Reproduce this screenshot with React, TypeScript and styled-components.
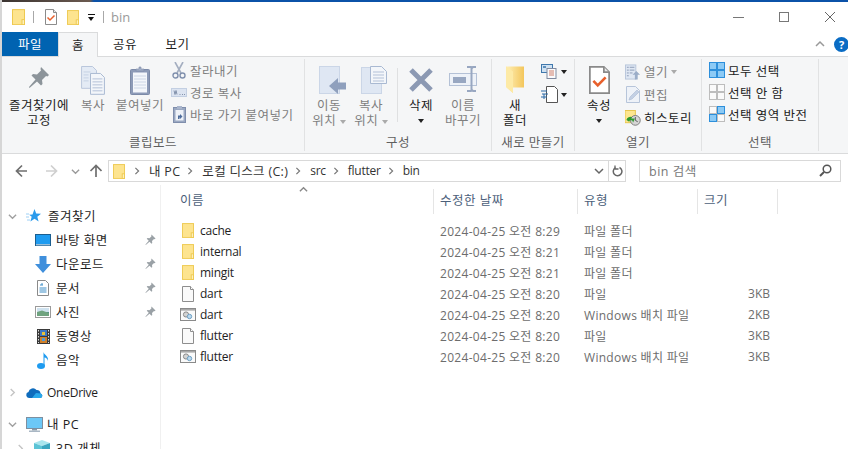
import { FC, ReactNode } from "react";
import styled, { createGlobalStyle, css } from "styled-components";

const GlobalStyle = createGlobalStyle`
  html, body {
    margin: 0;
    padding: 0;
    background: #fff;
    overflow: hidden;
  }
  body {
    font-family: "Open Sans", "Noto Sans CJK KR", sans-serif;
    font-size: 12.5px;
    letter-spacing: 0.5px;
    color: #1e1e1e;
  }
`;

const latinText = css`
  font-size: 12px;
  letter-spacing: -0.25px;
`;

type IconProps = { size?: number };

const FolderIcon: FC<IconProps> = ({ size = 13 }) => (
  <svg width={size} height={size * 1.25} viewBox="0 0 13 16">
    <rect x="0.5" y="0.5" width="12" height="15" fill="#fde48f" stroke="#eec94f" />
    <rect x="10" y="10.5" width="2.5" height="5" fill="#fdf0bd" stroke="#eec94f" />
  </svg>
);

const CheckDocIcon: FC<IconProps> = ({ size = 12 }) => (
  <svg width={size} height={size * 1.34} viewBox="0 0 12 16">
    <path d="M.5.5h8l3 3v12H.5z" fill="#fff" stroke="#8a8a8a" />
    <path d="M8.5.5v3h3" fill="#e8e8e8" stroke="#8a8a8a" />
    <path d="M2.5 8.5l2.5 2.5 4.5-4.5" fill="none" stroke="#e8602c" strokeWidth="1.5" />
  </svg>
);

const FileIcon: FC = () => (
  <svg width="12" height="16" viewBox="0 0 12 16">
    <path d="M.5.5h8l3 3v12H.5z" fill="#fafafa" stroke="#8e8e8e" />
    <path d="M8.5.5v3h3" fill="#fff" stroke="#8e8e8e" />
  </svg>
);

const BatchIcon: FC = () => (
  <svg width="16" height="13" viewBox="0 0 16 13">
    <rect x="0.5" y="0.5" width="15" height="12" fill="#fafafa" stroke="#8a8a8a" />
    <rect x="1" y="1" width="14" height="1.6" fill="#a8a8a8" />
    <circle cx="6" cy="6.5" r="2.6" fill="#d4d4d4" stroke="#8a8a8a" />
    <circle cx="9.5" cy="8.5" r="2.2" fill="#bcd9ee" stroke="#6ea0c4" />
  </svg>
);

const PinIcon: FC<IconProps & { color?: string }> = ({ size = 22, color = "#8c949a" }) => (
  <svg width={size} height={size} viewBox="0 0 22 22">
    <path d="M13 1l8 8-1.5 1.5-1.5-.5-4 4 .5 4-1.5 1.5-4-4-7.5 6.5L1 21l6.500-7.500-4-4L5 8l4 .5 4-4-.5-1.500z" fill={color} />
  </svg>
);

const CopyIcon: FC<IconProps> = ({ size = 24 }) => (
  <svg width={size} height={size * 1.2} viewBox="0 0 24 29">
    <path d="M.5.5h11l4 4v18H.5z" fill="#e4ebf5" stroke="#b9c7dc" />
    <path d="M9.500 7.500h10l4 4v17h-14z" fill="#f3f6fa" stroke="#a9b9d2" />
    <path d="M11.500 13h10M11.500 16h10M11.500 19h10M11.500 22h10M11.500 25h10" stroke="#b3c1d8" />
    <path d="M2.500 6h7M2.500 9h5M2.500 12h5M2.500 15h5" stroke="#c6d2e4" />
  </svg>
);

const ClipboardIcon: FC = () => (
  <svg width="20" height="29" viewBox="0 0 20 29">
    <rect x="0.500" y="3.500" width="19" height="25" rx="1" fill="#8d9bb8" stroke="#7c8aa8" />
    <rect x="3" y="6.500" width="14" height="20" fill="#f3f6fb" />
    <path d="M4 10h12M4 13h12M4 16h12M4 19h12M4 22h12" stroke="#ccd6e6" />
    <path d="M6 5V3h3V1h2v2h3v2z" fill="#a2aec6" stroke="#7c8aa8" strokeWidth=".6" />
  </svg>
);

const ScissorsIcon: FC = () => (
  <svg width="14" height="17" viewBox="0 0 14 17">
    <path d="M3 0l6 11M11 0L5 11" stroke="#a4aec0" strokeWidth="1.600" fill="none" />
    <circle cx="3.500" cy="13.500" r="2.500" fill="none" stroke="#8090ad" strokeWidth="1.400" />
    <circle cx="10.500" cy="13.500" r="2.500" fill="none" stroke="#8090ad" strokeWidth="1.400" />
  </svg>
);

const PathCopyIcon: FC = () => (
  <svg width="16" height="9" viewBox="0 0 16 9">
    <rect x="0.500" y="0.500" width="15" height="8" fill="#dce4f1" stroke="#c3cfe2" />
    <path d="M3 2.500l1 4 1-4 1 4M8.500 6.500h1M11 6.500h1M13 6.500h1" stroke="#6f7f9c" strokeWidth=".8" fill="none" />
  </svg>
);

const ShortcutPasteIcon: FC = () => (
  <svg width="13" height="17" viewBox="0 0 13 17">
    <rect x="0.500" y="1.500" width="12" height="15" fill="#9aa8c2" stroke="#7f8eac" />
    <rect x="2.500" y="4" width="8" height="10.500" fill="#eef2f8" />
    <path d="M5 13v-3.500h2V8l2.500 2.500L7 13v-1.500H6.500V13z" fill="#4e6d9c" />
    <rect x="4" y="0" width="5" height="3" fill="#a9b5cc" />
  </svg>
);

const MoveIcon: FC = () => (
  <svg width="33" height="28" viewBox="-6 0 33 28">
    <rect x="0.500" y="0.500" width="20" height="27" fill="#dfe7f3" stroke="#cbd6e7" />
    <path d="M10 20l9-8v4.500h8v7h-8V28z" fill="#8fa0bd" />
  </svg>
);

const CopyToIcon: FC = () => (
  <svg width="32" height="28" viewBox="-6 0 32 28">
    <rect x="0.500" y="1.500" width="20" height="26" fill="#dfe7f3" stroke="#cbd6e7" />
    <path d="M9.500.5h11l5 5v12h-16z" fill="#f3f6fa" stroke="#a9b9d2" />
    <path d="M12 6h11M12 9h11M12 12h11M12 15h11" stroke="#b3c1d8" />
  </svg>
);

const DeleteIcon: FC = () => (
  <svg width="26" height="27" viewBox="0 -1 26 27">
    <path d="M3 3l20 20M23 3L3 23" stroke="#8c99b3" strokeWidth="5" />
  </svg>
);

const RenameIcon: FC = () => (
  <svg width="28" height="26" viewBox="0 0 28 26">
    <rect x="0.500" y="7.500" width="27" height="12" fill="#eef2f8" stroke="#b4c1d6" />
    <rect x="4" y="11" width="13" height="6" fill="#98a7c1" />
    <path d="M18 1h4l1 1 1-1h3M18 25h4l1-1 1 1h3M22.500 2v22" stroke="#98a7c1" strokeWidth="2" fill="none" />
  </svg>
);

const NewFolderIcon: FC = () => (
  <svg width="19" height="27" viewBox="0 0 19 27">
    <defs>
      <linearGradient id="nf" x1="0" x2="1" y1="0" y2="0">
        <stop offset="0" stopColor="#fff0b8" />
        <stop offset="1" stopColor="#f3c65c" />
      </linearGradient>
    </defs>
    <path d="M0 .5h18v21H7v5.500L0 21z" fill="url(#nf)" />
    <path d="M0 .5l7 5V27L0 21z" fill="#fdeaa6" />
  </svg>
);

const NewItemIcon: FC = () => (
  <svg width="19" height="15" viewBox="0 0 19 15">
    <rect x="0.500" y="0.500" width="11" height="8" fill="#cfe1f2" stroke="#3f78ad" />
    <rect x="2" y="2" width="3" height="2" fill="#5c8fbc" />
    <rect x="6" y="4.500" width="9" height="10" fill="#fafbfd" stroke="#7f8aa0" />
    <path d="M8 7h5M8 9h5M8 11h5" stroke="#cf7f6a" />
  </svg>
);

const EasyAccessIcon: FC = () => (
  <svg width="19" height="17" viewBox="0 0 19 17">
    <path d="M5.500.5h8l3 3v13h-11z" fill="#fff" stroke="#555" />
    <path d="M0 5h6M1 8h6M0 11h6M3 8v5" stroke="#2a6aa8" />
  </svg>
);

const OpenWithIcon: FC = () => (
  <svg width="17" height="16" viewBox="0 0 17 16">
    <rect x="0.500" y="0.500" width="11" height="15" fill="#dfe7f3" stroke="#b7c5da" />
    <path d="M2 3h2M5 3h5M2 6h2M5 6h5M2 9h2M5 9h3M2 12h2" stroke="#8b9ab5" />
    <path d="M8 11l4-4 4 4h-2.500v5h-3v-5z" fill="#9badc8" />
  </svg>
);

const EditIcon: FC = () => (
  <svg width="14" height="17" viewBox="0 0 14 17">
    <path d="M.5.5h9l4 4v12H.5z" fill="#eef2f8" stroke="#b7c5da" />
    <path d="M3 14l1-3 7-7 2 2-7 7z" fill="#c3d0e4" stroke="#a9b9d2" strokeWidth=".6" />
  </svg>
);

const HistoryIcon: FC = () => (
  <svg width="17" height="16" viewBox="0 0 17 16">
    <rect x="0" y="0" width="11" height="13" fill="#fde68f" stroke="#e6c34a" />
    <circle cx="11" cy="10.500" r="5.200" fill="#d6d6d6" stroke="#7a7a7a" />
    <path d="M11 7v3.500l2.500 1.500" stroke="#555" fill="none" />
    <path d="M1.500 10a4.500 4.500 0 0 1 6-3l-1 1.500h4L8.500 13l-.5-2a2 2 0 0 0-3.500 1z" fill="#2f9a2f" />
  </svg>
);

const SelectAllIcon: FC<{ cells: boolean[] }> = ({ cells }) => (
  <svg width="16" height="16" viewBox="0 0 16 16">
    {cells.map((on, i) => (
      <rect
        key={i}
        x={i % 2 === 0 ? 0.5 : 8.5}
        y={i < 2 ? 0.5 : 8.5}
        width="7"
        height="7"
        fill={on ? "#8ccaf5" : "#fafafa"}
        stroke={on ? "#2d8fdb" : "#bdbdbd"}
      />
    ))}
  </svg>
);

const Chevron: FC<{ dir: "left" | "right" | "down" | "up"; color?: string; size?: number }> = ({
  dir,
  color = "#a0a0a0",
  size = 9,
}) => {
  const points = {
    right: "3,1 7,5 3,9",
    left: "7,1 3,5 7,9",
    down: "1,3 5,7 9,3",
    up: "1,7 5,3 9,7",
  }[dir];
  return (
    <svg width={size} height={size} viewBox="0 0 10 10">
      <polyline points={points} fill="none" stroke={color} strokeWidth="1.500" />
    </svg>
  );
};

const NavArrow: FC<{ dir: "left" | "right" | "up"; color: string }> = ({ dir, color }) => {
  const d = {
    left: "M12 7H2M7 1.500L1.500 7 7 12.500",
    right: "M1 7h10M6 1.500L11.500 7 6 12.500",
    up: "M7 13V2M1.500 7L7 1.500 12.500 7",
  }[dir];
  return (
    <svg width="13" height="14" viewBox="0 0 13 14">
      <path d={d} fill="none" stroke={color} strokeWidth="1.700" />
    </svg>
  );
};

const StarIcon: FC = () => (
  <svg width="15" height="14" viewBox="0 0 15 14">
    <path d="M8.500 0l1.700 4.500 4.800.2-3.700 3 1.300 4.800-4.100-2.700-4.100 2.700 1.300-4.800-2.500-2 3.300-.2z" fill="#2b9bec" />
    <path d="M0 5h3M0 8h3M1 11h3" stroke="#9ed0f5" />
  </svg>
);

const DesktopIcon: FC = () => (
  <svg width="16" height="12" viewBox="0 0 16 12">
    <rect x="0" y="0" width="16" height="12" fill="#1b5e8f" />
    <rect x="1" y="1" width="14" height="9" fill="#1e9bf0" />
    <rect x="1" y="10.300" width="14" height="1" fill="#cfe7f8" />
  </svg>
);

const DownloadIcon: FC = () => (
  <svg width="16" height="17" viewBox="0 0 16 17">
    <path d="M4.500 0h7v8H16l-8 9-8-9h4.500z" fill="#3f8fdc" />
  </svg>
);

const DocumentIcon: FC = () => (
  <svg width="12" height="16" viewBox="0 0 12 16">
    <path d="M.5.5h8l3 3v12H.5z" fill="#fff" stroke="#8a8a8a" />
    <path d="M3 5h3M5 3v2M2.500 8h7M2.500 10h7M2.500 12h7" stroke="#3f8fc8" />
  </svg>
);

const PictureIcon: FC = () => (
  <svg width="16" height="12" viewBox="0 0 16 12">
    <rect x="0.500" y="0.500" width="15" height="11" fill="#fff" stroke="#9a9a9a" />
    <rect x="2" y="2" width="12" height="4" fill="#cfe2ef" />
    <rect x="2" y="6" width="12" height="4" fill="#4f8f8a" />
    <path d="M2 6l5-1.500L14 7v3H2z" fill="#6fa37f" />
  </svg>
);

const VideoIcon: FC = () => (
  <svg width="13" height="15" viewBox="0 0 13 15">
    <rect width="13" height="15" fill="#3a3a3a" />
    <rect x="3" y="1" width="7" height="6" fill="#3e78c4" />
    <rect x="3" y="8" width="7" height="6" fill="#d0802a" />
    <rect x="5" y="3" width="3" height="3" fill="#e8c23a" />
    <rect x="5" y="9" width="3" height="3" fill="#4e9ad8" />
    <path d="M1.500 1v13M11.500 1v13" stroke="#ddd" strokeDasharray="1.500 1.500" />
  </svg>
);

const MusicIcon: FC = () => (
  <svg width="12" height="17" viewBox="0 0 12 17">
    <ellipse cx="4" cy="14" rx="4" ry="3" fill="#1e9bf0" />
    <path d="M6.500 14V0c.5 3 5.500 4 4.500 9-.5-2-2-3.500-3.500-3.500V14z" fill="#1e9bf0" />
  </svg>
);

const OneDriveIcon: FC = () => (
  <svg width="17" height="11" viewBox="0 0 17 11">
    <path d="M3 11a3 3 0 0 1-.5-5.900A4.500 4.500 0 0 1 10.500 3a3.500 3.500 0 0 1 4 3.500A2.300 2.300 0 0 1 14.500 11z" fill="#0f6cbd" />
    <path d="M6 11l4-5 4.500.5A2.300 2.300 0 0 1 14.500 11z" fill="#29a8ea" />
  </svg>
);

const MonitorIcon: FC = () => (
  <svg width="17" height="15" viewBox="0 0 17 15">
    <rect x="0.500" y="0.500" width="16" height="11" fill="#6cc8f7" stroke="#7d8fa0" />
    <rect x="6" y="12" width="5" height="1.500" fill="#8a9aa8" />
    <rect x="3" y="13.500" width="11" height="1.500" fill="#a9b7c4" />
  </svg>
);

const CubeIcon: FC = () => (
  <svg width="16" height="16" viewBox="0 0 16 16">
    <path d="M8 0l8 3-8 3-8-3z" fill="#a9e6ee" />
    <path d="M0 3l8 3v10L0 13z" fill="#5cc4d6" />
    <path d="M16 3L8 6v10l8-3z" fill="#3aa6c0" />
  </svg>
);

const SearchIcon: FC = () => (
  <svg width="13" height="13" viewBox="0 0 13 13">
    <circle cx="8" cy="5" r="3.800" fill="none" stroke="#555" strokeWidth="1.500" />
    <path d="M5 8l-4 4" stroke="#555" strokeWidth="2" />
  </svg>
);

const RefreshIcon: FC = () => (
  <svg width="11" height="12" viewBox="0 0 11 12">
    <path d="M7.500 2.500a4.300 4.300 0 1 1-4 .1" fill="none" stroke="#666" strokeWidth="1.500" />
    <path d="M3 .5v3.500h3.500" fill="none" stroke="#666" strokeWidth="1.300" />
  </svg>
);

const Large: FC<{ width: number; icon: ReactNode; muted?: boolean; caret?: boolean; children: ReactNode }> = ({
  width,
  icon,
  muted,
  caret,
  children,
}) => (
  <LargeButton $width={width} $muted={muted}>
    <LargeIcon>{icon}</LargeIcon>
    <LargeText>{children}</LargeText>
    {caret && (
      <CaretLine>
        <Caret />
      </CaretLine>
    )}
  </LargeButton>
);

const rows = [
  { name: "cache", icon: "folder", date: "2024-04-25 오전 8:29", type: "파일 폴더", size: "" },
  { name: "internal", icon: "folder", date: "2024-04-25 오전 8:21", type: "파일 폴더", size: "" },
  { name: "mingit", icon: "folder", date: "2024-04-25 오전 8:21", type: "파일 폴더", size: "" },
  { name: "dart", icon: "file", date: "2024-04-25 오전 8:20", type: "파일", size: "3KB" },
  { name: "dart", icon: "batch", date: "2024-04-25 오전 8:20", type: "Windows 배치 파일", size: "2KB" },
  { name: "flutter", icon: "file", date: "2024-04-25 오전 8:20", type: "파일", size: "3KB" },
  { name: "flutter", icon: "batch", date: "2024-04-25 오전 8:20", type: "Windows 배치 파일", size: "3KB" },
];

const quickAccess = [
  { label: "바탕 화면", icon: <DesktopIcon />, pin: true },
  { label: "다운로드", icon: <DownloadIcon />, pin: true },
  { label: "문서", icon: <DocumentIcon />, pin: true },
  { label: "사진", icon: <PictureIcon />, pin: true },
  { label: "동영상", icon: <VideoIcon />, pin: false },
  { label: "음악", icon: <MusicIcon />, pin: false },
];

const crumbs = [
  { label: "내 PC", latin: false },
  { label: "로컬 디스크 (C:)", latin: false },
  { label: "src", latin: true },
  { label: "flutter", latin: true },
  { label: "bin", latin: true },
];

const rowIcon = (kind: string) => {
  if (kind === "folder") return <FolderIcon size={12} />;
  if (kind === "file") return <FileIcon />;
  return <BatchIcon />;
};

export default function App() {
  return (
    <Window>
      <GlobalStyle />
      <TopStrip />
      <TitleBar>
        <QuickAccess>
          <FolderIcon />
          <TitleSep />
          <QuickItem>
            <CheckDocIcon />
          </QuickItem>
          <QuickItem>
            <FolderIcon size={12} />
          </QuickItem>
          <TitleCaret />
          <TitleSep />
          <TitleText>bin</TitleText>
        </QuickAccess>
        <WindowControls>
          <MinimizeGlyph />
          <MaximizeGlyph />
          <svg width="12" height="12" viewBox="0 0 12 12">
            <path d="M1 1l10 10M11 1L1 11" stroke="#666" />
          </svg>
        </WindowControls>
      </TitleBar>

      <TabBar>
        <FileTab>파일</FileTab>
        <HomeTab>홈</HomeTab>
        <PlainTab $width={54}>공유</PlainTab>
        <PlainTab $width={51}>보기</PlainTab>
        <TabSpacer />
        <Chevron dir="up" color="#999" size={10} />
        <HelpBadge>?</HelpBadge>
      </TabBar>

      <Ribbon>
        <Group $width={303}>
          <GroupBody $pad={6}>
            <Large width={62} icon={<PinIcon />}>
              즐겨찾기에
              <br />
              고정
            </Large>
            <Large width={46} muted icon={<CopyIcon />}>
              복사
            </Large>
            <Large width={48} muted icon={<ClipboardIcon />}>
              붙여넣기
            </Large>
            <SmallColumn $gap={7} $rowHeight={22}>
              <SmallRow $muted>
                <SmallIcon>
                  <ScissorsIcon />
                </SmallIcon>
                잘라내기
              </SmallRow>
              <SmallRow $muted>
                <SmallIcon>
                  <PathCopyIcon />
                </SmallIcon>
                경로 복사
              </SmallRow>
              <SmallRow $muted>
                <SmallIcon>
                  <ShortcutPasteIcon />
                </SmallIcon>
                바로 가기 붙여넣기
              </SmallRow>
            </SmallColumn>
          </GroupBody>
          <GroupLabel>클립보드</GroupLabel>
        </Group>

        <Group $width={187}>
          <GroupBody $pad={4}>
            <Large width={40} muted icon={<MoveIcon />}>
              이동
              <br />
              위치 <Caret $light />
            </Large>
            <Large width={44} muted icon={<CopyToIcon />}>
              복사
              <br />
              위치 <Caret $light />
            </Large>
            <InnerSep />
            <Large width={46} icon={<DeleteIcon />} caret>
              삭제
            </Large>
            <Large width={38} muted icon={<RenameIcon />}>
              이름
              <br />
              바꾸기
            </Large>
          </GroupBody>
          <GroupLabel>구성</GroupLabel>
        </Group>

        <Group $width={83}>
          <GroupBody $pad={3}>
            <Large width={40} icon={<NewFolderIcon />}>
              새
              <br />
              폴더
            </Large>
            <SmallColumn $gap={6} $rowHeight={23} $top={1}>
              <SmallRow $tight>
                <NewItemIcon />
                <Caret />
              </SmallRow>
              <SmallRow $tight>
                <EasyAccessIcon />
                <Caret />
              </SmallRow>
            </SmallColumn>
          </GroupBody>
          <GroupLabel>새로 만들기</GroupLabel>
        </Group>

        <Group $width={127}>
          <GroupBody $pad={4}>
            <Large width={40} icon={<CheckDocIcon size={21} />} caret>
              속성
            </Large>
            <SmallColumn $gap={6} $rowHeight={23} $top={1}>
              <SmallRow $muted>
                <SmallIcon>
                  <OpenWithIcon />
                </SmallIcon>
                열기 <Caret $light />
              </SmallRow>
              <SmallRow $muted>
                <SmallIcon>
                  <EditIcon />
                </SmallIcon>
                편집
              </SmallRow>
              <SmallRow>
                <SmallIcon>
                  <HistoryIcon />
                </SmallIcon>
                히스토리
              </SmallRow>
            </SmallColumn>
          </GroupBody>
          <GroupLabel>열기</GroupLabel>
        </Group>

        <Group $width={117}>
          <GroupBody $pad={7}>
            <SmallColumn $gap={0} $rowHeight={22}>
              <SmallRow>
                <SmallIcon>
                  <SelectAllIcon cells={[true, true, true, true]} />
                </SmallIcon>
                모두 선택
              </SmallRow>
              <SmallRow>
                <SmallIcon>
                  <SelectAllIcon cells={[false, false, false, false]} />
                </SmallIcon>
                선택 안 함
              </SmallRow>
              <SmallRow>
                <SmallIcon>
                  <SelectAllIcon cells={[false, true, true, false]} />
                </SmallIcon>
                선택 영역 반전
              </SmallRow>
            </SmallColumn>
          </GroupBody>
          <GroupLabel>선택</GroupLabel>
        </Group>
      </Ribbon>

      <AddressRow>
        <NavButton $width={30}>
          <NavArrow dir="left" color="#6f6f6f" />
        </NavButton>
        <NavButton $width={30}>
          <NavArrow dir="right" color="#cfcfcf" />
        </NavButton>
        <NavButton $width={18}>
          <Chevron dir="down" color="#9a9a9a" />
        </NavButton>
        <NavButton $width={22}>
          <NavArrow dir="up" color="#6f6f6f" />
        </NavButton>
        <AddressBox>
          <FolderIcon size={12} />
          {crumbs.map((c) => (
            <Crumb key={c.label} $latin={c.latin}>
              <Chevron dir="right" color="#777" size={8} />
              <CrumbLabel>{c.label}</CrumbLabel>
            </Crumb>
          ))}
          <AddressEnd>
            <Chevron dir="down" color="#666" size={10} />
            <RefreshCell>
              <RefreshIcon />
            </RefreshCell>
          </AddressEnd>
        </AddressBox>
        <SearchBox>
          bin 검색
          <SearchIcon />
        </SearchBox>
      </AddressRow>

      <Main>
        <Nav>
          <NavRow $indent={8}>
            <NavChevron>
              <Chevron dir="down" />
            </NavChevron>
            <NavIcon $width={22} $left>
              <StarIcon />
            </NavIcon>
            <NavLabel>즐겨찾기</NavLabel>
          </NavRow>
          {quickAccess.map((q) => (
            <NavRow key={q.label} $indent={34}>
              <NavIcon $width={22}>{q.icon}</NavIcon>
              <NavLabel>{q.label}</NavLabel>
              {q.pin && (
                <NavPin>
                  <PinIcon size={11} color="#9aa1a6" />
                </NavPin>
              )}
            </NavRow>
          ))}
          <NavRow $indent={8} $gapTop $latin>
            <NavChevron>
              <Chevron dir="right" color="#c4c4c4" />
            </NavChevron>
            <NavIcon $width={21} $left>
              <OneDriveIcon />
            </NavIcon>
            OneDrive
          </NavRow>
          <NavRow $indent={8} $gapTop>
            <NavChevron>
              <Chevron dir="down" />
            </NavChevron>
            <NavIcon $width={21} $left>
              <MonitorIcon />
            </NavIcon>
            <NavLabel>내 PC</NavLabel>
          </NavRow>
          <NavRow $indent={16}>
            <NavChevron>
              <Chevron dir="right" color="#c4c4c4" />
            </NavChevron>
            <NavIcon $width={22} $left>
              <CubeIcon />
            </NavIcon>
            <NavLabel>3D 개체</NavLabel>
          </NavRow>
        </Nav>

        <List>
          <HeaderRow>
            <HeaderCell $pad={19}>
              이름
              <SortCaret>
                <Chevron dir="up" color="#888" size={9} />
              </SortCaret>
            </HeaderCell>
            <HeaderCell $pad={6}>수정한 날짜</HeaderCell>
            <HeaderCell $pad={6}>유형</HeaderCell>
            <HeaderCell $pad={6}>크기</HeaderCell>
          </HeaderRow>
          <ListBody>
            {rows.map((r, i) => (
              <FileRow key={i}>
                <NameCell>
                  <NameIcon>{rowIcon(r.icon)}</NameIcon>
                  {r.name}
                </NameCell>
                <InfoCell $pad={6}>{r.date}</InfoCell>
                <InfoCell $pad={6}>{r.type}</InfoCell>
                <SizeCell>{r.size}</SizeCell>
              </FileRow>
            ))}
          </ListBody>
        </List>
      </Main>
    </Window>
  );
}

const columns = "273px 144px 120px 80px";

const Window = styled.div`
  width: 848px;
  height: 449px;
  overflow: hidden;
  display: flex;
  flex-direction: column;
  border-left: 2px solid #d6d6d6;
  box-sizing: border-box;
`;

const TopStrip = styled.div`
  height: 2px;
  margin-left: -2px;
  flex: none;
  background: linear-gradient(to right, #3a3330 0, #6b5a50 90px, #0b52a8 94px, #0b52a8 100%);
`;

const TitleBar = styled.div`
  height: 30px;
  flex: none;
  display: flex;
  align-items: center;
  justify-content: space-between;
`;

const QuickAccess = styled.div`
  display: flex;
  align-items: center;
  padding-left: 10px;
  gap: 7px;
`;

const QuickItem = styled.div`
  display: flex;
  margin-left: 3px;
`;

const TitleSep = styled.div`
  width: 1px;
  height: 12px;
  margin: 0 1px;
  background: #a8a8a8;
`;

const TitleCaret = styled.div`
  width: 7px;
  height: 7px;
  margin-left: 2px;
  border-top: 1px solid #111;
  box-sizing: border-box;
  position: relative;
  &::after {
    content: "";
    position: absolute;
    left: 0;
    top: 2px;
    border-style: solid;
    border-width: 4px 3.5px 0;
    border-color: #111 transparent transparent;
  }
`;

const TitleText = styled.span`
  color: #9a9a9a;
  font-size: 13px;
  letter-spacing: 0;
  margin-left: -1px;
`;

const WindowControls = styled.div`
  display: flex;
  align-items: center;
  gap: 35px;
  padding-right: 12px;
`;

const MinimizeGlyph = styled.div`
  width: 11px;
  height: 1px;
  background: #777;
`;

const MaximizeGlyph = styled.div`
  width: 10px;
  height: 10px;
  box-sizing: border-box;
  border: 1px solid #777;
`;

const TabBar = styled.div`
  height: 24px;
  flex: none;
  display: flex;
  align-items: center;
`;

const FileTab = styled.div`
  width: 56px;
  height: 24px;
  box-sizing: border-box;
  padding-bottom: 2px;
  background: #0063b1;
  color: #fff;
  display: flex;
  align-items: center;
  justify-content: center;
`;

const HomeTab = styled.div`
  width: 40px;
  height: 25px;
  margin-top: 1px;
  padding-bottom: 2px;
  box-sizing: border-box;
  background: #f5f6f7;
  border: 1px solid #dadbdc;
  border-bottom: none;
  display: flex;
  align-items: center;
  justify-content: center;
  position: relative;
  z-index: 1;
`;

const PlainTab = styled.div<{ $width: number }>`
  width: ${(p) => p.$width}px;
  padding-bottom: 2px;
  display: flex;
  justify-content: center;
`;

const TabSpacer = styled.div`
  flex: 1;
`;

const HelpBadge = styled.div`
  width: 15px;
  height: 15px;
  margin-left: 9px;
  margin-right: -1px;
  flex: none;
  border-radius: 50%;
  background: #0a6cc4;
  color: #fff;
  font-size: 11px;
  font-weight: 700;
  letter-spacing: 0;
  line-height: 15px;
  text-align: center;
`;

const Ribbon = styled.div`
  height: 98px;
  flex: none;
  box-sizing: border-box;
  display: flex;
  padding: 2px 0 2px;
  background: #f5f6f7;
  border-top: 1px solid #dadbdc;
  border-bottom: 1px solid #dadbdc;
`;

const Group = styled.div<{ $width: number }>`
  width: ${(p) => p.$width}px;
  flex: none;
  box-sizing: border-box;
  display: flex;
  flex-direction: column;
  border-right: 1px solid #e1e2e3;
`;

const GroupBody = styled.div<{ $pad: number }>`
  height: 75px;
  flex: none;
  display: flex;
  padding-left: ${(p) => p.$pad}px;
`;

const GroupLabel = styled.div`
  text-align: center;
  color: #5f5f5f;
  line-height: 17px;
`;

const LargeButton = styled.div<{ $width: number; $muted?: boolean }>`
  width: ${(p) => p.$width}px;
  flex: none;
  display: flex;
  flex-direction: column;
  align-items: center;
  padding-top: 7px;
  color: ${(p) => (p.$muted ? "#7f7f7f" : "#222")};
`;

const LargeIcon = styled.div`
  height: 32px;
  display: flex;
  align-items: flex-start;
  justify-content: center;
`;

const LargeText = styled.div`
  text-align: center;
  line-height: 15px;
  white-space: nowrap;
`;

const CaretLine = styled.div`
  height: 15px;
  display: flex;
  align-items: center;
`;

const Caret = styled.span<{ $light?: boolean }>`
  display: inline-block;
  vertical-align: middle;
  width: 0;
  height: 0;
  border-style: solid;
  border-width: 4px 3.5px 0;
  border-color: ${(p) => (p.$light ? "#aaa" : "#222")} transparent transparent;
`;

const InnerSep = styled.div`
  width: 1px;
  height: 54px;
  margin: 9px 0 0 4px;
  background: #dfe0e1;
  flex: none;
`;

const SmallColumn = styled.div<{ $gap: number; $rowHeight: number; $top?: number }>`
  margin-left: ${(p) => p.$gap}px;
  padding-top: ${(p) => p.$top ?? 0}px;
  display: grid;
  align-content: start;
  grid-auto-rows: ${(p) => p.$rowHeight}px;
`;

const SmallRow = styled.div<{ $muted?: boolean; $tight?: boolean }>`
  display: flex;
  align-items: center;
  gap: ${(p) => (p.$tight ? 1 : 3)}px;
  white-space: nowrap;
  color: ${(p) => (p.$muted ? "#7f7f7f" : "#222")};
`;

const SmallIcon = styled.div`
  width: 16px;
  display: flex;
  justify-content: center;
  flex: none;
`;

const AddressRow = styled.div`
  height: 31px;
  flex: none;
  display: flex;
  align-items: center;
  padding-top: 3px;
  box-sizing: border-box;
  padding-left: 4px;
`;

const NavButton = styled.div<{ $width: number }>`
  width: ${(p) => p.$width}px;
  display: flex;
  justify-content: center;
  flex: none;
`;

const AddressBox = styled.div`
  width: 518px;
  height: 22px;
  margin-left: 2px;
  box-sizing: border-box;
  border: 1px solid #d9d9d9;
  display: flex;
  align-items: center;
  padding-left: 4px;
  color: #333;
`;

const Crumb = styled.div<{ $latin?: boolean }>`
  display: flex;
  align-items: center;
  gap: 8px;
  margin-left: 6px;
  white-space: nowrap;
  letter-spacing: 0.3px;
  &:nth-child(2) {
    margin-left: 8px;
  }
  ${(p) => p.$latin && latinText}
`;

const CrumbLabel = styled.span`
  margin-bottom: 2px;
`;

const AddressEnd = styled.div`
  margin-left: auto;
  height: 100%;
  display: flex;
  align-items: center;
  gap: 4px;
`;

const RefreshCell = styled.div`
  width: 16px;
  height: 100%;
  border-left: 1px solid #d9d9d9;
  display: flex;
  align-items: center;
  justify-content: center;
`;

const SearchBox = styled.div`
  width: 202px;
  height: 22px;
  margin-left: 13px;
  box-sizing: border-box;
  border: 1px solid #d9d9d9;
  display: flex;
  align-items: center;
  justify-content: space-between;
  padding: 0 8px 2px 9px;
  color: #777;
`;

const Main = styled.div`
  flex: 1;
  display: flex;
  min-height: 0;
`;

const Nav = styled.div`
  width: 159px;
  flex: none;
  box-sizing: border-box;
  border-right: 1px solid #f0f0f0;
  padding-top: 19px;
`;

const NavRow = styled.div<{ $indent: number; $gapTop?: boolean; $latin?: boolean }>`
  height: 24px;
  display: flex;
  align-items: center;
  position: relative;
  padding-left: ${(p) => p.$indent - 2}px;
  margin-top: ${(p) => (p.$gapTop ? 8 : 0)}px;
  white-space: nowrap;
  ${(p) => p.$latin && latinText}
`;

const NavLabel = styled.span`
  margin-bottom: 2px;
`;

const NavChevron = styled.div`
  width: 18px;
  flex: none;
  display: flex;
`;

const NavIcon = styled.div<{ $width: number; $left?: boolean }>`
  width: ${(p) => p.$width}px;
  flex: none;
  display: flex;
  justify-content: ${(p) => (p.$left ? "flex-start" : "center")};
  padding-right: ${(p) => (p.$left ? 0 : 4)}px;
  box-sizing: border-box;
`;

const NavPin = styled.div`
  position: absolute;
  left: 143px;
  top: 6px;
  display: flex;
`;

const List = styled.div`
  flex: 1;
  min-width: 0;
`;

const HeaderRow = styled.div`
  display: grid;
  grid-template-columns: ${columns};
  padding-top: 4px;
  height: 25px;
  position: relative;
`;

const HeaderCell = styled.div<{ $pad: number }>`
  box-sizing: border-box;
  border-right: 1px solid #e5e5e5;
  padding-left: ${(p) => p.$pad}px;
  color: #4c607a;
  line-height: 24px;
`;

const SortCaret = styled.div`
  position: absolute;
  left: 138px;
  top: 0;
  display: flex;
`;

const ListBody = styled.div`
  padding-top: 6px;
`;

const FileRow = styled.div`
  display: grid;
  grid-template-columns: ${columns};
  height: 21px;
  align-items: center;
  font-size: 12px;
  letter-spacing: 0.3px;
`;

const NameCell = styled.div`
  display: flex;
  align-items: center;
  padding-left: 19px;
  color: #1e1e1e;
  ${latinText}
`;

const NameIcon = styled.div`
  width: 16px;
  margin-right: 4px;
  display: flex;
  justify-content: center;
  flex: none;
`;

const InfoCell = styled.div<{ $pad: number }>`
  padding-left: ${(p) => p.$pad}px;
  color: #6d6d6d;
  white-space: nowrap;
`;

const SizeCell = styled.div`
  text-align: right;
  padding-right: 8px;
  color: #6d6d6d;
  letter-spacing: 0;
`;
